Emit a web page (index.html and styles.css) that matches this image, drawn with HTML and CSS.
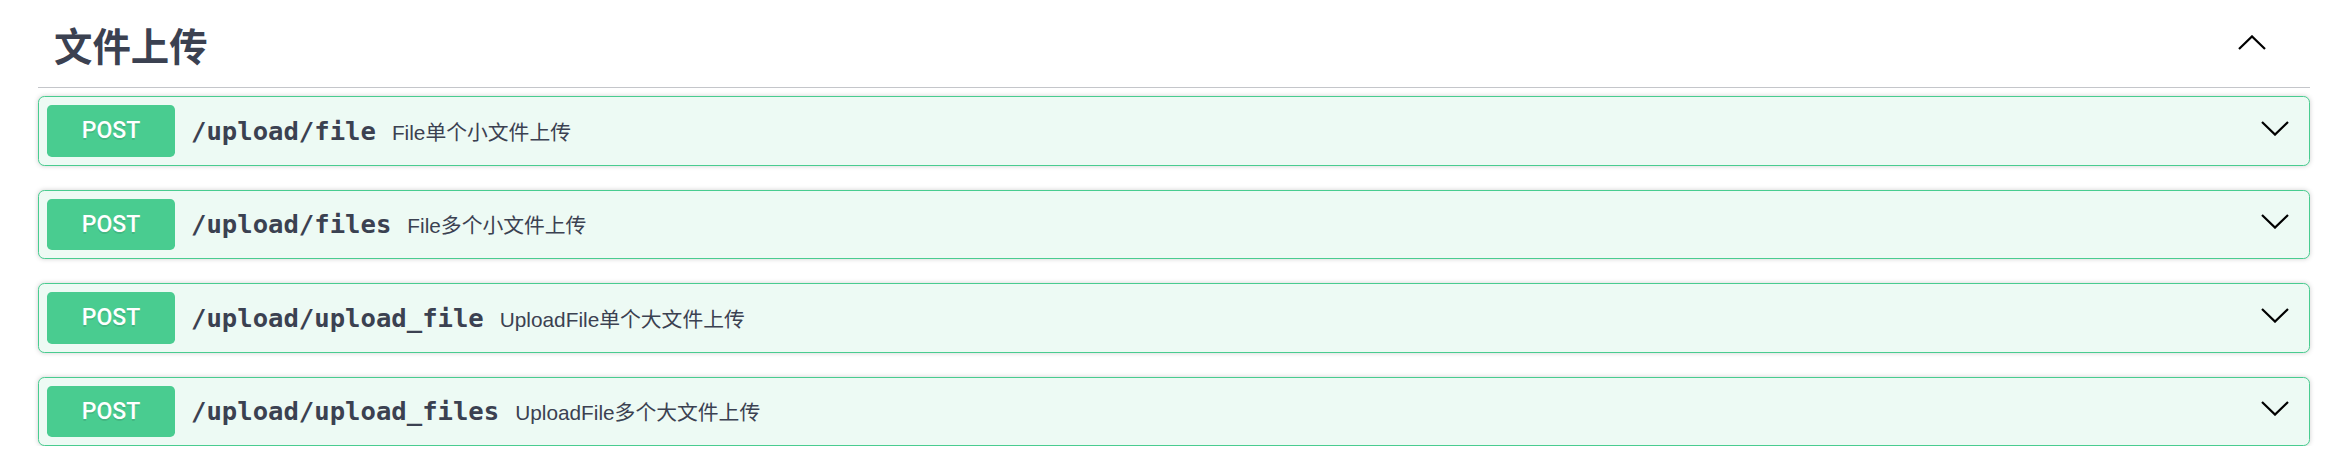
FILE: index.html
```html
<!DOCTYPE html>
<html lang="zh-CN">
<head>
<meta charset="utf-8">
<title>文件上传</title>
<link rel="stylesheet" href="styles.css">
</head>
<body>
<div class="wrapper">
  <section class="tag-section">
    <h3 class="tag-header">
      <span class="tag-name">文件上传</span>
      <button class="expand" aria-label="collapse">
        <svg class="chev" width="28" height="15" viewBox="0 0 28 15"><polyline points="1,14 14,1.4 27,14" /></svg>
      </button>
    </h3>
    <div class="ops">
      <div class="opblock">
        <span class="method">POST</span>
        <span class="path">/upload/file</span>
        <span class="desc">File单个小文件上传</span>
        <svg class="chev down" width="28" height="15" viewBox="0 0 28 15"><polyline points="1,1 14,13.6 27,1" /></svg>
      </div>
      <div class="opblock">
        <span class="method">POST</span>
        <span class="path">/upload/files</span>
        <span class="desc">File多个小文件上传</span>
        <svg class="chev down" width="28" height="15" viewBox="0 0 28 15"><polyline points="1,1 14,13.6 27,1" /></svg>
      </div>
      <div class="opblock">
        <span class="method">POST</span>
        <span class="path">/upload/upload_file</span>
        <span class="desc">UploadFile单个大文件上传</span>
        <svg class="chev down" width="28" height="15" viewBox="0 0 28 15"><polyline points="1,1 14,13.6 27,1" /></svg>
      </div>
      <div class="opblock">
        <span class="method">POST</span>
        <span class="path">/upload/upload_files</span>
        <span class="desc">UploadFile多个大文件上传</span>
        <svg class="chev down" width="28" height="15" viewBox="0 0 28 15"><polyline points="1,1 14,13.6 27,1" /></svg>
      </div>
    </div>
  </section>
</div>
</body>
</html>
```
FILE: styles.css
```css
* { box-sizing: border-box; }
html, body {
  margin: 0;
  padding: 0;
  background: #fff;
}
body {
  font-family: "Liberation Sans", "Noto Sans CJK SC", sans-serif;
  color: #3b4151;
}
.wrapper {
  max-width: 2336px;
  margin: 0 auto;
  padding: 0 32px;
}
.tag-header {
  margin: 0 0 8px;
  height: 88px;
  padding: 2px 32px 0 16px;
  display: flex;
  align-items: center;
  border-bottom: 1px solid rgba(59, 65, 81, 0.3);
}
.tag-name {
  flex: 1 1 auto;
  font-family: "Noto Sans CJK SC", sans-serif;
  font-size: 38.4px;
  font-weight: 700;
  color: #3b4151;
  line-height: 1.2;
}
.expand {
  border: none;
  background: none;
  padding: 0;
  margin: 0 12px 4px 0;
  display: flex;
}
.chev polyline {
  fill: none;
  stroke: #000;
  stroke-width: 2.2;
}
.ops {
  display: flex;
  flex-direction: column;
  gap: 24px;
}
.opblock {
  display: flex;
  align-items: center;
  height: 69.5px;
  padding: 0 8px;
  border: 1px solid #49cc90;
  border-radius: 6.4px;
  background: #edfaf4;
  box-shadow: 0 0 5px rgba(0, 0, 0, 0.19);
}
.method {
  flex: 0 0 auto;
  width: 128px;
  height: 51.5px;
  display: flex;
  align-items: center;
  justify-content: center;
  background: #49cc90;
  border-radius: 4.8px;
  color: #fff;
  font-family: Roboto, "Liberation Sans", sans-serif;
  font-weight: 500;
  font-size: 23px;
  text-shadow: 0 1.6px 0 rgba(0, 0, 0, 0.1);
}
.path {
  flex: 0 0 auto;
  padding: 0 16px;
  font-family: "DejaVu Sans Mono", monospace;
  font-weight: 700;
  font-size: 25.6px;
  color: #3b4151;
}
.desc {
  flex: 1 1 auto;
  font-family: "Liberation Sans", "Noto Sans CJK SC", sans-serif;
  font-size: 20.8px;
  color: #3b4151;
}
.chev.down {
  flex: 0 0 auto;
  margin: 0 12px 5px 0;
}
```
